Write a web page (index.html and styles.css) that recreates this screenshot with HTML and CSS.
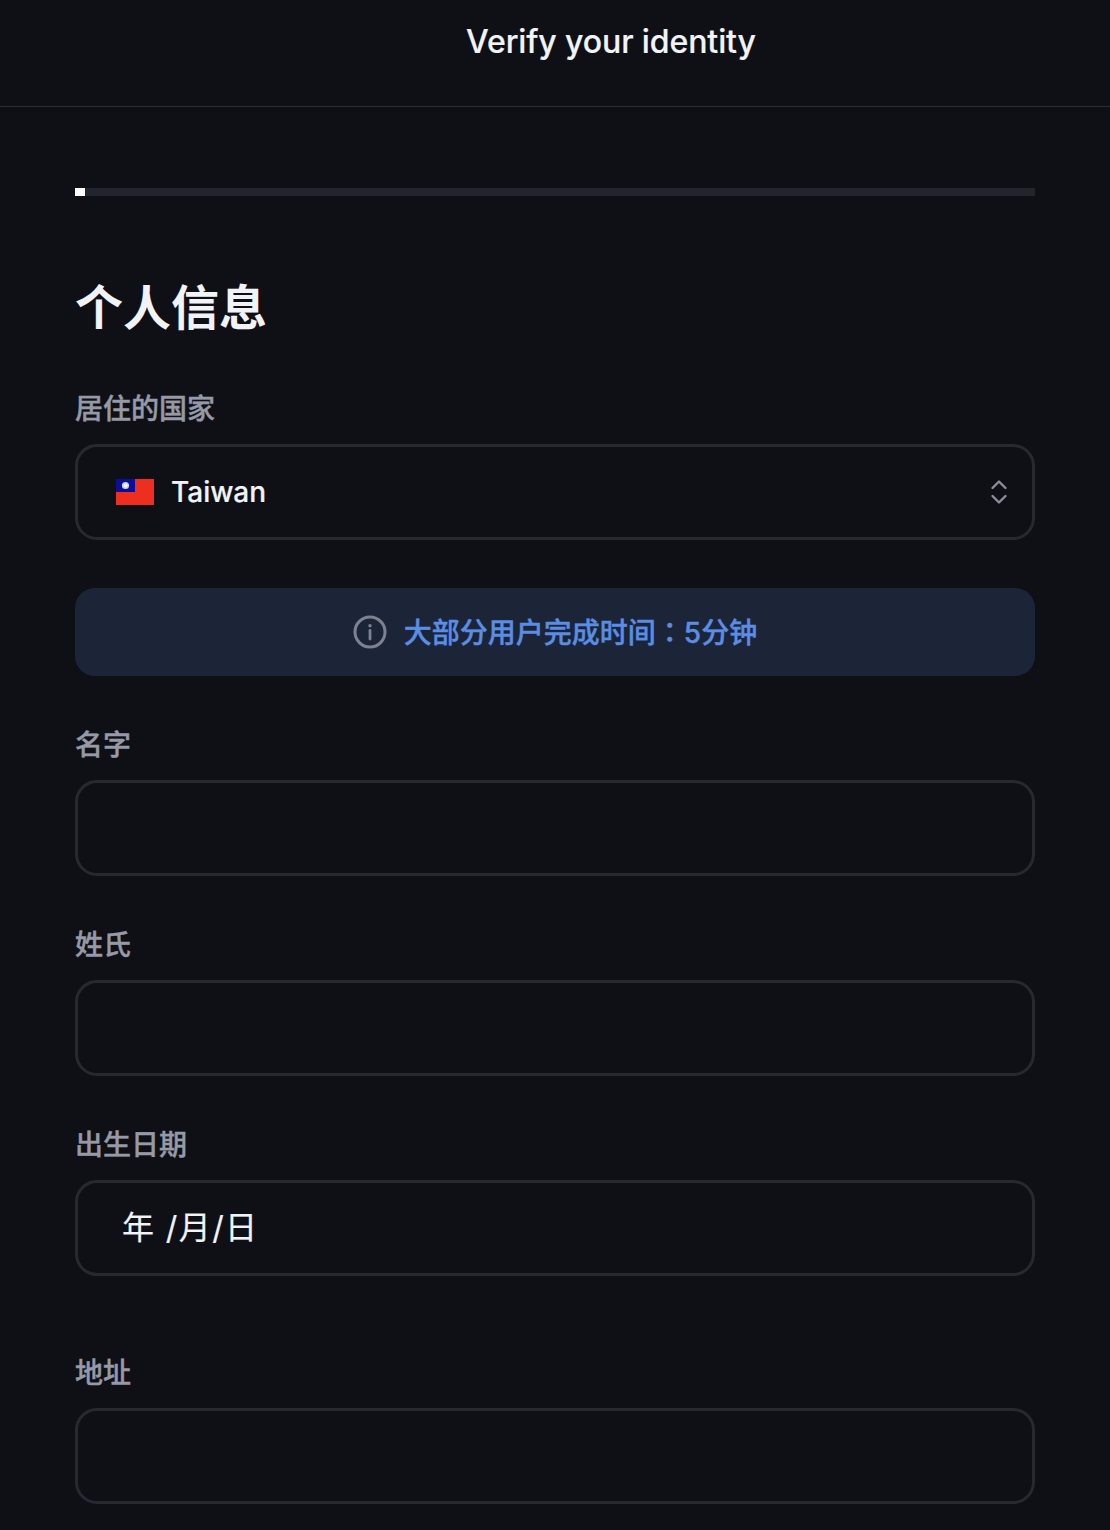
FILE: index.html
```html
<!DOCTYPE html>
<html lang="zh-CN">
<head>
  <meta charset="UTF-8">
  <meta name="viewport" content="width=device-width, initial-scale=1.0">
  <title>Verify your identity</title>
  <link rel="stylesheet" href="styles.css">
</head>
<body>
  <header class="topbar">
    <h2>Verify your identity</h2>
  </header>

  <main class="container">
    <div class="progress">
      <div class="progress-fill"></div>
    </div>

    <h1>个人信息</h1>

    <div class="field">
      <label>居住的国家</label>
      <div class="input select">
        <svg class="flag" viewBox="0 0 38 26" width="38" height="26">
          <rect width="38" height="26" fill="#ee2f1f"/>
          <rect width="19" height="13" fill="#0c0f96"/>
          <circle cx="9.5" cy="6.5" r="3.6" fill="#c9d2f5"/>
          <circle cx="9.5" cy="6.5" r="2" fill="#f2f4ff"/>
        </svg>
        <span class="select-value">Taiwan</span>
        <svg class="chevrons" viewBox="0 0 18 28" width="18" height="28" fill="none" stroke="#8b8e98" stroke-width="2.4" stroke-linecap="round" stroke-linejoin="round">
          <path d="M2.5 10 L9 3.5 L15.5 10"/>
          <path d="M2.5 18 L9 24.5 L15.5 18"/>
        </svg>
      </div>
    </div>

    <div class="notice">
      <svg class="info-icon" viewBox="0 0 34 34" width="34" height="34" fill="none" stroke="#7d8293">
        <circle cx="17" cy="17" r="15" stroke-width="3"/>
        <path d="M17 15.5 V24" stroke-width="2.8" stroke-linecap="round"/>
        <circle cx="17" cy="10.8" r="1.7" fill="#7d8293" stroke="none"/>
      </svg>
      <span class="notice-text">大部分用户完成时间<span class="colon" lang="zh-TW">：</span>5分钟</span>
    </div>

    <div class="field">
      <label>名字</label>
      <div class="input"></div>
    </div>

    <div class="field">
      <label>姓氏</label>
      <div class="input"></div>
    </div>

    <div class="field field-date">
      <label>出生日期</label>
      <div class="input date">年 /月/日</div>
    </div>

    <div class="field">
      <label>地址</label>
      <div class="input"></div>
    </div>
  </main>
</body>
</html>
```

FILE: styles.css
```css
* {
  box-sizing: border-box;
}

html, body {
  height: 1530px;
  overflow: hidden;
}

body {
  margin: 0;
  background: #0e1016;
  color: #f2f3f6;
  font-family: Inter, "Noto Sans CJK SC", sans-serif;
}

.topbar {
  height: 107px;
  border-bottom: 1px solid #2a2c33;
  padding-top: 21px;
  text-align: center;
}

.topbar h2 {
  margin: 0;
  padding-left: 112px;
  font-size: 32px;
  line-height: 42px;
  font-weight: 500;
  letter-spacing: -0.1px;
  -webkit-text-stroke: 0.2px #f2f3f6;
}

.container {
  padding: 81px 75px 0;
}

.progress {
  height: 8px;
  background: #23252c;
}

.progress-fill {
  width: 10px;
  height: 8px;
  background: #ffffff;
}

h1 {
  margin: 80px 0 0;
  font-size: 48px;
  line-height: 64px;
  font-weight: 700;
}

.field {
  margin-top: 52px;
}

.field label {
  display: block;
  height: 32px;
  margin-bottom: 20px;
  color: #969aa6;
  font-size: 28px;
  line-height: 34px;
  font-weight: 500;
  -webkit-text-stroke: 0.4px #969aa6;
}

.input {
  height: 96px;
  border: 3px solid #272930;
  border-radius: 22px;
}

.select {
  display: flex;
  align-items: center;
  padding: 0 24px 0 38px;
}

.flag {
  flex: none;
}

.select-value {
  margin-left: 17px;
  font-size: 28px;
  font-weight: 500;
  -webkit-text-stroke: 0.2px #f2f3f6;
}

.chevrons {
  margin-left: auto;
}

.notice {
  display: flex;
  align-items: center;
  justify-content: center;
  gap: 17px;
  height: 88px;
  margin-top: 48px;
  border-radius: 20px;
  background: #1c2438;
  color: #5b8de2;
  font-size: 28px;
  font-weight: 500;
}

.notice-text {
  padding-bottom: 3px;
  -webkit-text-stroke: 0.4px #5b8de2;
}

.colon {
  font-family: "Noto Sans CJK TC", sans-serif;
}

.field-date .input {
  display: flex;
  align-items: center;
  padding: 0 0 6px 44px;
  font-size: 32px;
  letter-spacing: 1.4px;
  -webkit-text-stroke: 0.2px #f2f3f6;
}

.field-date + .field {
  margin-top: 80px;
}
```
